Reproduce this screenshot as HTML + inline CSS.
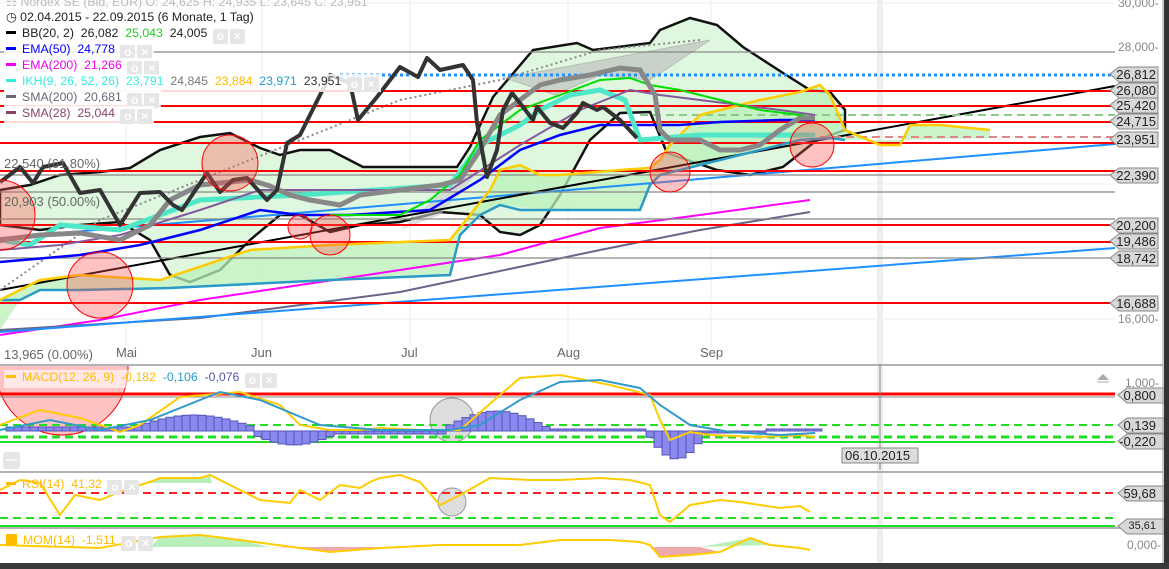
<!DOCTYPE html>
<html><head><meta charset="utf-8">
<style>
html,body{margin:0;padding:0;background:#fff;}
body{width:1169px;height:569px;overflow:hidden;position:relative;font-family:"Liberation Sans",sans-serif;}
svg{position:absolute;left:0;top:0;}
.lg{position:absolute;left:4px;font-size:12.3px;line-height:15px;white-space:nowrap;background:rgba(255,255,255,.85);padding:0 2px;}
.ic{display:inline-block;width:15px;height:15px;background:#e6e6e6;vertical-align:-3px;margin-left:2px;border-radius:2px;color:#fff;font-size:12px;text-align:center;line-height:15px;font-weight:bold;}
.sw{display:inline-block;width:10px;height:3px;vertical-align:3px;margin-right:6px;}
.ax{position:absolute;font-size:12px;color:#888;}
.lab{position:absolute;left:1112px;width:48px;height:15px;font-size:13px;line-height:15px;color:#222;text-align:right;padding-right:4px;box-sizing:border-box;}
</style></head><body>
<svg width="1169" height="569" viewBox="0 0 1169 569">
<defs>
<polygon id="tag" points="0,7 9,0 48,0 48,15 9,15" />
<clipPath id="mc"><rect x="0" y="366" width="1163" height="106"/></clipPath>
</defs>
<g stroke="#eee" stroke-width="1">
<line x1="0" y1="3" x2="1115" y2="3"/><line x1="0" y1="319" x2="1115" y2="319"/><line x1="0" y1="184" x2="1115" y2="184"/><line x1="0" y1="248" x2="1115" y2="248"/>
<line x1="126" y1="0" x2="126" y2="345"/><line x1="262" y1="0" x2="262" y2="345"/><line x1="410" y1="0" x2="410" y2="345"/><line x1="568" y1="0" x2="568" y2="345"/><line x1="711" y1="0" x2="711" y2="345"/>
</g>
<rect x="877" y="0" width="6" height="563" fill="#eee"/>
<path d="M0,190 L30,185 60,175 100,172 130,168 160,150 200,137 230,133 260,148 280,155 300,150 330,150 363,167 457,167 470,147 493,97 533,50 577,43 593,50 650,43 660,30 690,18 717,25 743,47 783,73 810,90 830,92 845,110 L845,130 817,140 783,167 750,175 717,170 667,153 650,112 620,113 590,140 560,195 540,225 520,235 500,232 480,215 440,212 400,222 360,225 330,232 300,215 280,215 250,240 220,270 190,282 170,275 150,240 120,222 80,225 40,230 0,225 Z" fill="#dff7df" stroke="#111" stroke-width="2.5"/>
<path d="M0,300 L40,280 80,275 160,280 250,250 330,245 450,240 490,190 500,170 520,165 540,175 560,175 620,170 650,168 660,160 670,145 700,115 760,100 800,92 820,85 830,95 845,130 880,145 900,145 910,125 940,125 990,130 L990,138 900,140 845,140 830,138 800,140 740,155 720,160 700,165 680,170 660,175 650,185 640,210 550,210 500,205 480,215 460,235 450,275 330,280 170,288 80,290 40,290 20,300 0,330 Z" fill="#b9f0b9" opacity=".75"/>
<polygon points="505,78 710,40 650,80 600,75 555,95" fill="#bbb" opacity=".6" stroke="#999"/>
<polygon points="400,230 460,175 480,170 440,215" fill="#ccc" opacity=".6"/>
<polyline points="0,335 100,320 200,300 300,285 400,270 500,255 600,228 700,215 810,200" fill="none" stroke="#f0f" stroke-width="2"/>
<polyline points="0,330 200,318 400,292 600,250 700,230 810,212" fill="none" stroke="#66668a" stroke-width="2"/>
<line x1="0" y1="332" x2="1115" y2="248" stroke="#1e90ff" stroke-width="2"/>
<line x1="0" y1="238" x2="1115" y2="144" stroke="#1e90ff" stroke-width="2"/>
<line x1="0" y1="290" x2="1115" y2="86" stroke="#000" stroke-width="2"/>
<polyline points="0,290 100,220 200,180 300,140 400,100 500,80 600,50 700,40" fill="none" stroke="#888" stroke-width="2" stroke-dasharray="2,3"/>
<g stroke-width="1.2" stroke="#888">
<line x1="0" y1="52" x2="1115" y2="52"/><line x1="0" y1="175" x2="1115" y2="175"/><line x1="0" y1="219" x2="1115" y2="219"/><line x1="0" y1="258" x2="1115" y2="258"/><line x1="0" y1="192" x2="1115" y2="192"/>
</g>
<line x1="340" y1="75" x2="1115" y2="75" stroke="#1e90ff" stroke-width="3" stroke-dasharray="3,3"/>
<g stroke="#f00" stroke-width="2">
<line x1="0" y1="91" x2="1115" y2="91"/><line x1="0" y1="106" x2="1115" y2="106"/><line x1="0" y1="122" x2="1115" y2="122"/><line x1="0" y1="143" x2="1115" y2="143"/><line x1="0" y1="171" x2="1115" y2="171"/><line x1="0" y1="225" x2="1115" y2="225"/><line x1="0" y1="242" x2="1115" y2="242"/><line x1="0" y1="303" x2="1115" y2="303"/>
</g>
<line x1="640" y1="115" x2="1115" y2="115" stroke="#8c8" stroke-width="2" stroke-dasharray="8,5"/>
<line x1="820" y1="137" x2="1115" y2="137" stroke="#d88" stroke-width="2" stroke-dasharray="8,5"/>
<polyline points="0,300 20,300 40,290 80,290 170,288 330,280 450,275 460,235 480,215 500,205 520,210 640,210 650,185 660,175 680,170 700,165 720,160 740,155 800,140 830,138 845,140" fill="none" stroke="#2a9bc7" stroke-width="2.5"/>
<polyline points="0,300 40,280 80,275 160,280 250,250 330,245 450,240 490,190 500,170 520,165 540,175 560,175 620,170 650,168 660,160 670,145 700,115 760,100 800,92 820,85 830,95 845,130 880,145 900,145 910,125 940,125 990,130" fill="none" stroke="#fc0" stroke-width="2.5"/>
<polyline points="0,262 80,255 140,245 200,230 260,210 300,215 350,215 430,210 480,180 520,150 560,135 600,125 640,125 680,125 720,122 780,120 815,120" fill="none" stroke="#00f" stroke-width="2.5"/>
<polyline points="0,240 30,245 60,225 120,230 200,200 300,195 450,185 480,145 520,125 540,110 570,95 600,90 625,100 640,140 700,135 780,135 815,135" fill="none" stroke="#4ee8c8" stroke-width="5"/>
<polyline points="0,250 60,245 120,235 200,210 260,190 330,190 450,190 520,145 580,110 630,90 660,95 700,100 740,105 780,110 815,115" fill="none" stroke="#835a9c" stroke-width="2"/>
<polyline points="330,215 400,215 430,200 460,175 480,140 520,110 560,95 600,80 630,78 650,85 680,90 720,100 760,110 800,115 815,118" fill="none" stroke="#0d0" stroke-width="2"/>
<polyline points="0,240 40,235 80,233 120,240 150,225 170,200 200,185 250,180 270,186 290,195 310,200 340,205 360,195 400,190 440,185 460,180 480,150 500,115 520,100 540,85 560,80 590,75 620,68 640,70 655,95 660,130 670,140 700,140 720,150 740,150 760,145 780,130 800,118 815,118" fill="none" stroke="#888" stroke-width="5"/>
<polyline points="0,182 3,180 20,167 33,183 43,167 63,163 80,193 100,190 120,225 140,193 160,192 173,205 182,210 207,173 220,192 233,180 247,178 267,200 277,190 287,143 300,135 330,75 350,83 358,120 377,97 400,67 418,77 427,58 440,70 463,65 473,80 477,123 487,177 497,150 503,110 512,93 523,107 533,120 537,107 550,123 563,128 577,113 583,103 597,110 603,107 620,120 637,138" fill="none" stroke="#333" stroke-width="4" stroke-linejoin="round"/>
<g fill="rgba(255,80,80,.35)" stroke="#f00" stroke-width="1">
<circle cx="0" cy="215" r="35"/><circle cx="100" cy="285" r="33"/><circle cx="230" cy="163" r="28"/><circle cx="300" cy="227" r="12"/><circle cx="330" cy="235" r="20"/><circle cx="670" cy="172" r="20"/><circle cx="812" cy="145" r="22"/>
<circle cx="62" cy="369" r="66" clip-path="url(#mc)"/>
</g>
<circle cx="452" cy="420" r="22" fill="rgba(180,180,180,.45)" stroke="#999"/>
<circle cx="452" cy="502" r="14" fill="rgba(180,180,180,.45)" stroke="#999"/>
<g stroke="#999" stroke-width="1.5" fill="none">
<line x1="0" y1="365" x2="1163" y2="365"/><line x1="0" y1="472" x2="1163" y2="472"/><line x1="0" y1="528" x2="1163" y2="528"/>
</g>
<line x1="0" y1="394" x2="1115" y2="394" stroke="#f00" stroke-width="3"/>
<line x1="0" y1="397" x2="1115" y2="397" stroke="#888" stroke-width="1"/>
<g stroke="#2d2" stroke-width="2" stroke-dasharray="8,5"><line x1="0" y1="425" x2="1115" y2="425"/><line x1="0" y1="437" x2="1115" y2="437" stroke-width="3"/></g>
<line x1="0" y1="442" x2="1115" y2="442" stroke="#2d2" stroke-width="2"/>
<g id="hist" fill="#8888ee" stroke="#5555bb" stroke-width="1"></g>
<polyline points="0,425 40,410 80,418 120,432 140,425 180,397 240,392 280,405 300,425 330,430 360,430 380,428 420,430 460,430 500,395 520,378 560,375 610,385 650,395 660,420 670,440 690,432 710,435 760,437 800,435 815,437" fill="none" stroke="#fc0" stroke-width="2"/>
<polyline points="0,430 50,420 100,430 150,420 220,392 260,400 320,425 380,430 450,430 480,425 520,400 560,382 600,380 640,388 660,405 690,425 730,432 780,435 815,433" fill="none" stroke="#3399cc" stroke-width="2"/>
<line x1="0" y1="493" x2="1115" y2="493" stroke="#f22" stroke-width="2" stroke-dasharray="8,5"/>
<line x1="0" y1="518" x2="1115" y2="518" stroke="#2d2" stroke-width="2" stroke-dasharray="8,5"/>
<line x1="0" y1="526" x2="1115" y2="526" stroke="#2d2" stroke-width="2"/>
<polygon points="143,483 160,478 200,478 210,475 212,483" fill="#b9f0b9"/>
<polyline points="0,490 20,480 40,483 60,515 75,495 100,500 130,488 150,482 160,478 200,478 210,475 240,490 260,500 290,503 300,490 320,500 340,485 360,488 370,482 380,478 400,475 420,482 440,505 460,495 490,478 530,480 560,480 600,478 630,480 650,485 660,515 670,522 690,505 720,500 740,502 760,505 780,508 800,506 810,512" fill="none" stroke="#fc0" stroke-width="2"/>
<polygon points="150,547 160,537 200,535 240,540 270,547" fill="#b9f0b9"/>
<polygon points="270,547 300,548 330,552 380,548 400,547" fill="#eaa"/>
<polygon points="700,547 750,538 770,545" fill="#b9f0b9"/>
<polygon points="650,547 660,557 690,555 720,552 700,547" fill="#eaa"/>
<polyline points="0,545 100,548 160,537 200,535 240,540 300,548 330,552 380,548 440,545 520,545 560,540 610,540 640,542 650,545 660,557 690,555 720,552 750,538 770,545 800,548 810,550" fill="none" stroke="#fc0" stroke-width="2"/>
<line x1="880" y1="365" x2="880" y2="470" stroke="#888"/>
<rect x="842" y="448" width="76" height="15" fill="#ddd" stroke="#888"/>
<g fill="#d8d8d8" stroke="#888">
<use href="#tag" x="1110" y="67"/><use href="#tag" x="1110" y="83"/><use href="#tag" x="1110" y="98"/><use href="#tag" x="1110" y="114"/><use href="#tag" x="1110" y="132"/><use href="#tag" x="1110" y="168"/><use href="#tag" x="1110" y="218"/><use href="#tag" x="1110" y="234"/><use href="#tag" x="1110" y="251"/><use href="#tag" x="1110" y="296"/>
<use href="#tag" x="1118" y="388"/><use href="#tag" x="1118" y="418"/><use href="#tag" x="1118" y="434"/><use href="#tag" x="1118" y="486"/><use href="#tag" x="1118" y="519"/>
</g>
<polygon points="1097,380 1103,374 1109,380" fill="#aaa"/><line x1="1097" y1="382" x2="1109" y2="382" stroke="#aaa"/>
<line x1="1163" y1="0" x2="1163" y2="563" stroke="#999"/>
<rect x="1164" y="0" width="5" height="569" fill="#333"/>
<rect x="0" y="563" width="1169" height="6" fill="#3a3a38"/>
<rect x="3" y="452" width="17" height="17" rx="3" fill="#e6e6e6"/>
<line x1="6" y1="460" x2="17" y2="460" stroke="#fff" stroke-width="1.5"/>
</svg>
<script>
(function(){var g=document.getElementById('hist');var s='';
function v(x){var r=0;
if(x<130)r=4;else if(x<250)r=4+12*Math.sin((x-130)/120*Math.PI);else if(x<330)r=-4-10*Math.sin((x-250)/80*Math.PI);else if(x<440)r=-3;else if(x<545)r=3+17*Math.sin((x-440)/105*Math.PI);else if(x<645)r=2;else if(x<700)r=-5-23*Math.sin((x-645)/55*Math.PI);else r=(x>760?2:-2);return r;}
for(var x=6;x<815;x+=8){var h=v(x);var y=h>0?431-h:431;s+='<rect x="'+x+'" y="'+y+'" width="8" height="'+Math.abs(h)+'"/>';}
g.innerHTML=s;})();
</script>
<div class="lg" style="top:-5px;color:#bbb;background:none">☷ Nordex SE (Bid, EUR)  O: 24,625  H: 24,935  L: 23,645  C: 23,951</div>
<div class="lg" style="top:10px;color:#222">◷ 02.04.2015 - 22.09.2015 (6 Monate, 1 Tag)</div>
<div class="lg" style="top:26px;color:#222"><span class="sw" style="background:#000"></span>BB(20, 2)&nbsp; 26,082&nbsp; <span style="color:#2c2">25,043</span>&nbsp; 24,005 <span class="ic">o</span><span class="ic">×</span></div>
<div class="lg" style="top:42px;color:#00f"><span class="sw" style="background:#00f"></span>EMA(50)&nbsp; 24,778 <span class="ic">o</span><span class="ic">×</span></div>
<div class="lg" style="top:58px;color:#e0e"><span class="sw" style="background:#e0e"></span>EMA(200)&nbsp; 21,266 <span class="ic">o</span><span class="ic">×</span></div>
<div class="lg" style="top:74px;color:#3ed"><span class="sw" style="background:#3ed"></span>IKH(9, 26, 52, 26)&nbsp; 23,791&nbsp; <span style="color:#777">24,845</span>&nbsp; <span style="color:#fb0">23,884</span>&nbsp; <span style="color:#29c">23,971</span>&nbsp; <span style="color:#333">23,951</span> <span class="ic">o</span><span class="ic">×</span></div>
<div class="lg" style="top:90px;color:#667"><span class="sw" style="background:#667"></span>SMA(200)&nbsp; 20,681 <span class="ic">o</span><span class="ic">×</span></div>
<div class="lg" style="top:106px;color:#846"><span class="sw" style="background:#846"></span>SMA(28)&nbsp; 25,044 <span class="ic">o</span><span class="ic">×</span></div>
<div class="ax" style="left:4px;top:156px;color:#666;font-size:13px">22,540 (61.80%)</div>
<div class="ax" style="left:4px;top:194px;color:#666;font-size:13px">20,903 (50.00%)</div>
<div class="ax" style="left:4px;top:347px;color:#666;font-size:13px">13,965 (0.00%)</div>
<div class="ax" style="left:116px;top:345px;color:#666;font-size:13px">Mai</div>
<div class="ax" style="left:251px;top:345px;color:#666;font-size:13px">Jun</div>
<div class="ax" style="left:401px;top:345px;color:#666;font-size:13px">Jul</div>
<div class="ax" style="left:557px;top:345px;color:#666;font-size:13px">Aug</div>
<div class="ax" style="left:700px;top:345px;color:#666;font-size:13px">Sep</div>
<div class="lg" style="top:370px;color:#fb0;background:rgba(255,255,255,.6)"><span class="sw" style="background:#fb0"></span>MACD(12, 26, 9)&nbsp; -0,182&nbsp; <span style="color:#29c">-0,106</span>&nbsp; <span style="color:#55a">-0,076</span> <span class="ic">o</span><span class="ic">×</span></div>
<div class="lg" style="top:477px;color:#fb0;background:none"><span class="sw" style="background:#fb0"></span>RSI(14)&nbsp; 41,32 <span class="ic">o</span><span class="ic">×</span></div>
<div class="lg" style="top:533px;color:#fb0;background:none"><span class="sw" style="background:#fb0;height:11px;width:11px;vertical-align:-1px"></span>MOM(14)&nbsp; -1,511 <span class="ic">o</span><span class="ic">×</span></div>
<div class="ax" style="left:845px;top:448px;font-size:13px;color:#222">06.10.2015</div>
<div class="ax" style="left:1118px;top:-4px">30,000-</div>
<div class="ax" style="left:1118px;top:40px">28,000-</div>
<div class="ax" style="left:1118px;top:312px">16,000-</div>
<div class="ax" style="left:1125px;top:376px">1,000-</div>
<div class="ax" style="left:1127px;top:538px">0,000-</div>
<div class="lab" style="top:67px">26,812</div><div class="lab" style="top:83px">26,080</div><div class="lab" style="top:98px">25,420</div><div class="lab" style="top:114px">24,715</div><div class="lab" style="top:132px">23,951</div><div class="lab" style="top:168px">22,390</div><div class="lab" style="top:218px">20,200</div><div class="lab" style="top:234px">19,486</div><div class="lab" style="top:251px">18,742</div><div class="lab" style="top:296px">16,688</div>
<div class="lab" style="top:388px;left:1118px;width:42px">0,800</div><div class="lab" style="top:418px;left:1118px;width:42px">0,139</div><div class="lab" style="top:434px;left:1118px;width:42px">-0,220</div><div class="lab" style="top:486px;left:1118px;width:42px">59,68</div><div class="lab" style="top:519px;left:1118px;width:42px;font-size:11px">35,61</div>
</body></html>
